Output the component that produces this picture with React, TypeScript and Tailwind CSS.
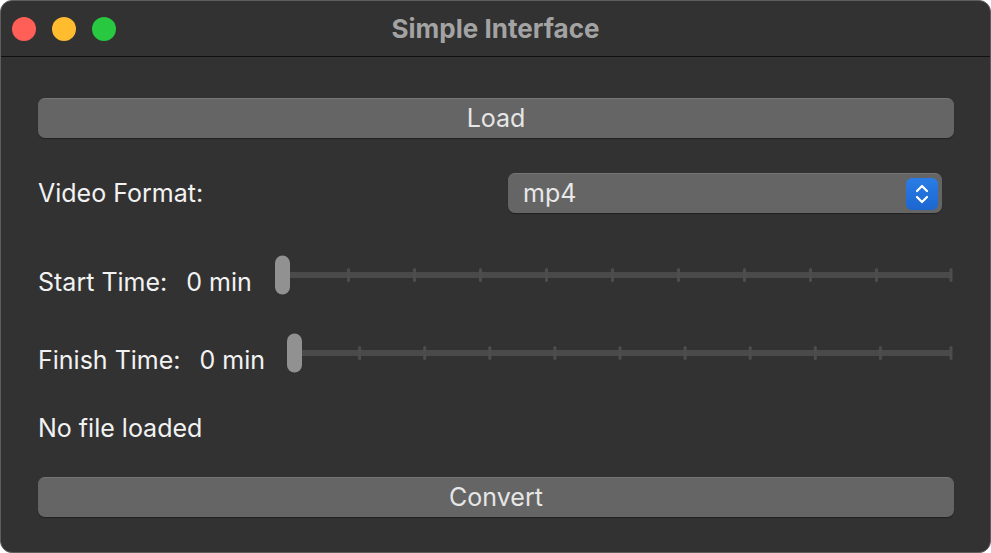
import React from "react";

type SliderProps = {
  width: number;
  spacing: number;
};

const Slider = ({ width, spacing }: SliderProps) => {
  const knob = 7.5;
  const end = width - 3;
  const ticks: number[] = [];
  for (let i = 1; i <= 9; i++) ticks.push(knob + spacing * i);
  ticks.push(end);
  return (
    <svg width={width} height={40} className="block shrink-0">
      <rect x={knob} y={17} width={end - knob + 1} height={6} rx={2} fill="#4a4a4a" />
      {ticks.map((t) => (
        <rect key={t} x={t - 1.5} y={13} width={3} height={14} rx={1.5} fill="#4d4d4d" />
      ))}
      <rect x={0} y={0.5} width={15} height={39} rx={7.5} fill="#919191" />
    </svg>
  );
};

const Button = ({ label }: { label: string }) => (
  <div className="h-[40px] rounded-[7px] bg-[#656565] shadow-[0_1px_1px_rgba(0,0,0,0.35)] border-t border-[#757575] flex items-center justify-center text-[25px] text-[#e6e6e6]">
    {label}
  </div>
);

export default function App() {
  return (
    <div
      className="w-[991px] h-[553px] bg-white overflow-hidden"
      style={{ fontFamily: "Inter, 'Noto Sans', sans-serif" }}
    >
      <div className="w-full h-full rounded-[12px] bg-[#323232] border border-[#5e5e5e] overflow-hidden flex flex-col">
        {/* title bar */}
        <div className="h-[56px] shrink-0 relative flex items-center border-b border-[#111]">
          <div className="flex gap-[16px] pl-[11px]">
            <span className="w-[24px] h-[24px] rounded-full bg-[#ff5f57]" />
            <span className="w-[24px] h-[24px] rounded-full bg-[#febc2e]" />
            <span className="w-[24px] h-[24px] rounded-full bg-[#28c840]" />
          </div>
          <div className="absolute inset-0 flex items-center justify-center text-[26px] font-bold text-[#a3a3a3]">
            Simple Interface
          </div>
        </div>

        {/* content */}
        <div className="flex flex-col pl-[37px] pr-[36px] pt-[41px] text-[25px] text-[#f2f2f2]">
          <Button label="Load" />

          <div className="mt-[35px] h-[40px] flex items-center">
            <span className="mt-[2px]">Video Format:</span>
            <div className="ml-auto mr-[12px] w-[434px] h-[40px] rounded-[7px] bg-[#656565] border-t border-[#757575] shadow-[0_1px_1px_rgba(0,0,0,0.35)] flex items-center pl-[15px] pr-[4px]">
              <span className="text-[#e8e8e8]">mp4</span>
              <div className="ml-auto w-[32px] h-[32px] rounded-[6px] bg-gradient-to-b from-[#2a7de6] to-[#1c66d0] flex items-center justify-center">
                <svg width="16" height="24" viewBox="0 0 16 24" fill="none" stroke="white" strokeWidth="2.2" strokeLinecap="round" strokeLinejoin="round">
                  <path d="M3 9 L8 4 L13 9" />
                  <path d="M3 15 L8 20 L13 15" />
                </svg>
              </div>
            </div>
          </div>

          <div className="mt-[42px] h-[40px] flex items-start">
            <span className="mt-[9px]">Start Time:</span>
            <span className="mt-[9px] ml-[19px]">0 min</span>
            <div className="ml-auto">
              <Slider width={679} spacing={66} />
            </div>
          </div>

          <div className="mt-[38px] h-[40px] flex items-start">
            <span className="mt-[9px]">Finish Time:</span>
            <span className="mt-[9px] ml-[19px]">0 min</span>
            <div className="ml-auto">
              <Slider width={667} spacing={65.1} />
            </div>
          </div>

          <div className="mt-[39px] h-[34px] flex items-center">No file loaded</div>

          <div className="mt-[31px]">
            <Button label="Convert" />
          </div>
        </div>
      </div>
    </div>
  );
}
